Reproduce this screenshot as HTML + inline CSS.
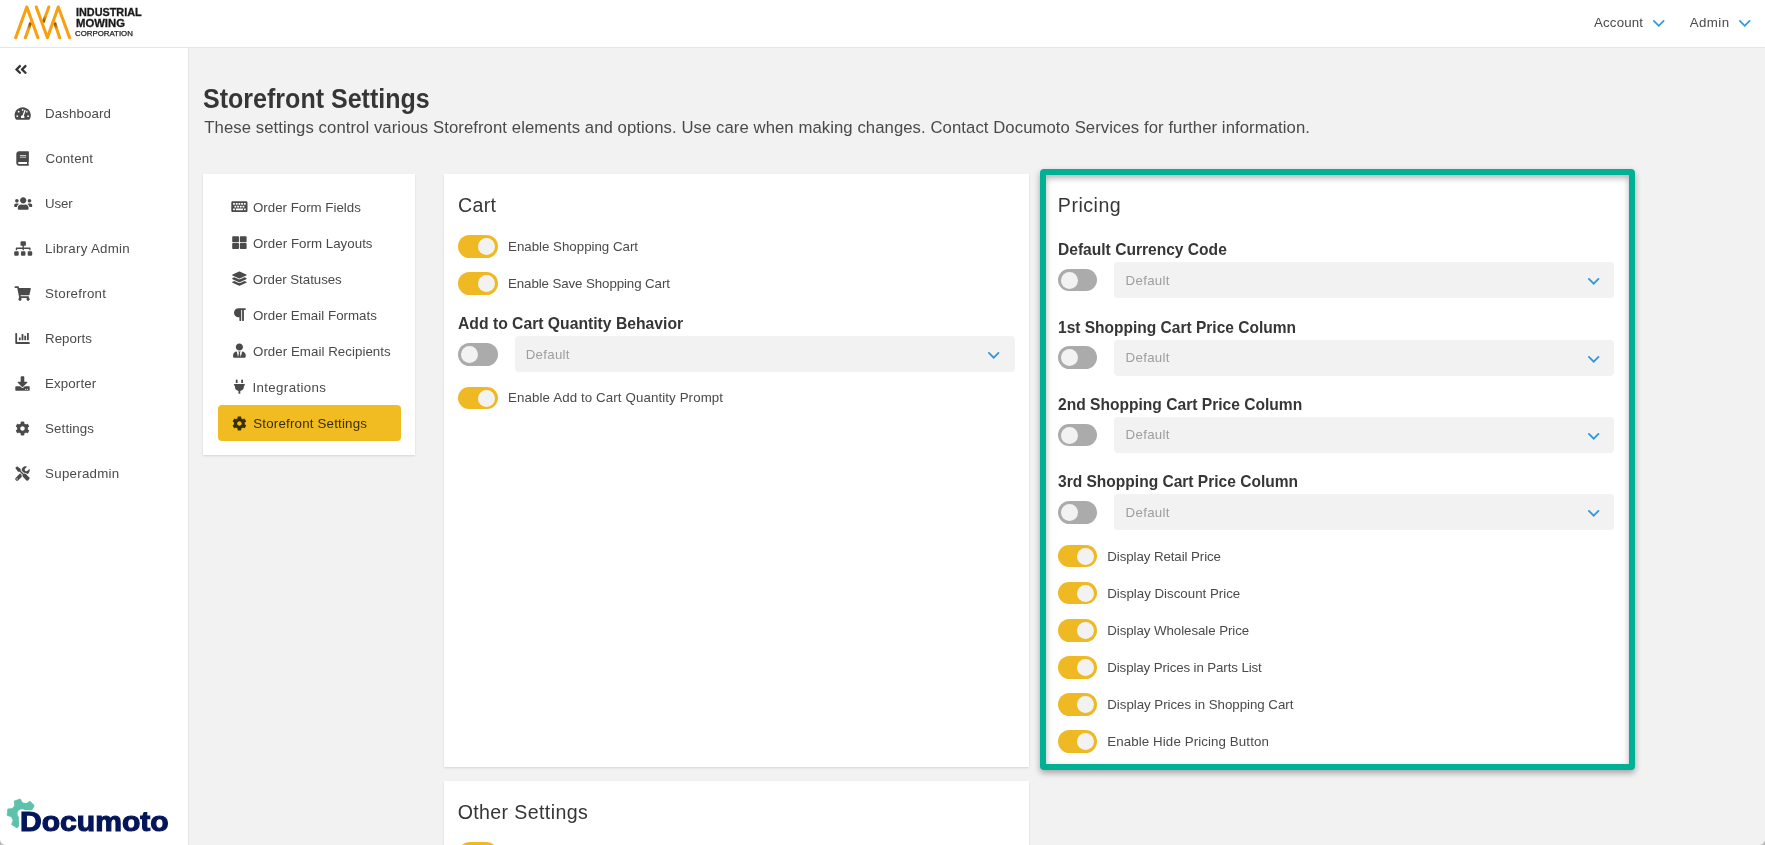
<!DOCTYPE html>
    <html lang="en"><head><meta charset="utf-8"><title>Storefront Settings</title>
    <style>
    html,body{margin:0;padding:0}
    body{width:1765px;height:845px;overflow:hidden;position:relative;background:#f2f2f2;font-family:"Liberation Sans",sans-serif;color:#4a4a4a}
    .t{position:absolute;white-space:pre;line-height:1;display:block;margin:0;font-weight:400;transform-origin:0 50%}
    .ic{position:absolute;display:block;overflow:visible}
    header{position:absolute;left:0;top:0;width:1765px;height:47px;background:#fff;border-bottom:1px solid #e6e6e6}
    nav.side{position:absolute;left:0;top:48px;width:188px;height:797px;background:#fff;border-right:1px solid #e6e6e6}
    .panel{position:absolute;background:#fff;box-shadow:0 1px 2px rgba(0,0,0,.12)}
    .active{position:absolute;left:218px;top:405px;width:183px;height:36px;background:#f0bc22;border-radius:4px}
    .tg{position:absolute;background:#ababab;display:block}
    .tg i{position:absolute;width:17px;height:17px;border-radius:50%;background:#f2f2f2;display:block}
    .tg.on{background:#eeb923}
    .sel{position:absolute;background:#f2f2f2;border-radius:4px}
    .frame{position:absolute;left:1040px;top:169px;width:583px;height:589px;border:6px solid #00b094;border-radius:4px;background:#fff;
     box-shadow:0 3px 6px rgba(0,0,0,.33), inset 0 3px 6px rgba(0,0,0,.3)}
    .c{position:absolute;width:6px;height:6px;display:block}
    #app{position:absolute;left:0;top:0;width:1765px;height:845px;overflow:hidden;will-change:transform}
</style></head><body><div id="app">
    
<main>
<h1 class="t" style="left:202.94px;top:84.41px;font-size:28.4px;letter-spacing:0.000px;color:#363636;font-weight:700;transform:translateY(0px) scaleX(0.8819);">Storefront Settings</h1>
<p class="t" style="left:204.27px;top:120.33px;font-size:16.7px;letter-spacing:0.078px;color:#4a4a4a;">These settings control various Storefront elements and options. Use care when making changes. Contact Documoto Services for further information.</p>
<div class="panel" style="left:203px;top:174px;width:212px;height:281px"></div>
<div class="active"></div>
<svg class="ic" style="left:231px;top:199px" width="18" height="16" viewBox="0 0 18 16"><path fill="#4a4a4a" transform="translate(0.30 0.40) scale(0.02813)" d="M528 448H48c-26.510 0-48-21.490-48-48V112c0-26.510 21.490-48 48-48h480c26.510 0 48 21.490 48 48v288c0 26.510-21.490 48-48 48zM128 180v-40c0-6.627-5.373-12-12-12H76c-6.627 0-12 5.373-12 12v40c0 6.627 5.373 12 12 12h40c6.627 0 12-5.373 12-12zm96 0v-40c0-6.627-5.373-12-12-12h-40c-6.627 0-12 5.373-12 12v40c0 6.627 5.373 12 12 12h40c6.627 0 12-5.373 12-12zm96 0v-40c0-6.627-5.373-12-12-12h-40c-6.627 0-12 5.373-12 12v40c0 6.627 5.373 12 12 12h40c6.627 0 12-5.373 12-12zm96 0v-40c0-6.627-5.373-12-12-12h-40c-6.627 0-12 5.373-12 12v40c0 6.627 5.373 12 12 12h40c6.627 0 12-5.373 12-12zm96 0v-40c0-6.627-5.373-12-12-12h-40c-6.627 0-12 5.373-12 12v40c0 6.627 5.373 12 12 12h40c6.627 0 12-5.373 12-12zm-336 96v-40c0-6.627-5.373-12-12-12h-40c-6.627 0-12 5.373-12 12v40c0 6.627 5.373 12 12 12h40c6.627 0 12-5.373 12-12zm96 0v-40c0-6.627-5.373-12-12-12h-40c-6.627 0-12 5.373-12 12v40c0 6.627 5.373 12 12 12h40c6.627 0 12-5.373 12-12zm96 0v-40c0-6.627-5.373-12-12-12h-40c-6.627 0-12 5.373-12 12v40c0 6.627 5.373 12 12 12h40c6.627 0 12-5.373 12-12zm96 0v-40c0-6.627-5.373-12-12-12h-40c-6.627 0-12 5.373-12 12v40c0 6.627 5.373 12 12 12h40c6.627 0 12-5.373 12-12zm-336 96v-40c0-6.627-5.373-12-12-12H76c-6.627 0-12 5.373-12 12v40c0 6.627 5.373 12 12 12h40c6.627 0 12-5.373 12-12zm288 0v-40c0-6.627-5.373-12-12-12H172c-6.627 0-12 5.373-12 12v40c0 6.627 5.373 12 12 12h232c6.627 0 12-5.373 12-12zm96 0v-40c0-6.627-5.373-12-12-12h-40c-6.627 0-12 5.373-12 12v40c0 6.627 5.373 12 12 12h40c6.627 0 12-5.373 12-12z"/></svg>
<span class="t" style="left:253.02px;top:200.95px;font-size:13.3px;letter-spacing:-0.006px;color:#4a4a4a;">Order Form Fields</span>
<svg class="ic" style="left:232px;top:235px" width="16" height="16" viewBox="0 0 16 16"><path fill="#4a4a4a" transform="translate(0.20 0.40) scale(0.02813)" d="M296 32h192c13.255 0 24 10.745 24 24v160c0 13.255-10.745 24-24 24H296c-13.255 0-24-10.745-24-24V56c0-13.255 10.745-24 24-24zm-80 0H24C10.745 32 0 42.745 0 56v160c0 13.255 10.745 24 24 24h192c13.255 0 24-10.745 24-24V56c0-13.255-10.745-24-24-24zM0 296v160c0 13.255 10.745 24 24 24h192c13.255 0 24-10.745 24-24V296c0-13.255-10.745-24-24-24H24c-13.255 0-24 10.745-24 24zm296 184h192c13.255 0 24-10.745 24-24V296c0-13.255-10.745-24-24-24H296c-13.255 0-24 10.745-24 24v160c0 13.255 10.745 24 24 24z"/></svg>
<span class="t" style="left:253.01px;top:236.95px;font-size:13.3px;letter-spacing:0.032px;color:#4a4a4a;">Order Form Layouts</span>
<svg class="ic" style="left:232px;top:271px" width="16" height="16" viewBox="0 0 16 16"><path fill="#4a4a4a" transform="translate(0.20 0.40) scale(0.02813)" d="M12.410 148.020l232.940 105.670c6.800 3.090 14.490 3.090 21.290 0l232.940-105.670c16.550-7.510 16.550-32.520 0-40.030L266.650 2.310a25.607 25.607 0 0 0-21.290 0L12.410 107.980c-16.550 7.510-16.550 32.530 0 40.040zm487.180 88.280l-58.090-26.330-161.640 73.270c-7.560 3.430-15.590 5.170-23.860 5.170s-16.290-1.740-23.860-5.170L70.510 209.970l-58.100 26.330c-16.550 7.500-16.550 32.500 0 40l232.940 105.590c6.800 3.080 14.490 3.080 21.290 0L499.590 276.300c16.550-7.500 16.550-32.500 0-40zm0 127.800l-57.870-26.230-161.860 73.370c-7.560 3.430-15.590 5.170-23.860 5.170s-16.290-1.740-23.860-5.170L70.290 337.870 12.410 364.100c-16.550 7.500-16.550 32.500 0 40l232.940 105.590c6.800 3.080 14.490 3.080 21.290 0L499.590 404.100c16.550-7.500 16.550-32.500 0-40z"/></svg>
<span class="t" style="left:252.85px;top:272.95px;font-size:13.3px;letter-spacing:-0.039px;color:#4a4a4a;">Order Statuses</span>
<svg class="ic" style="left:233px;top:307px" width="14" height="16" viewBox="0 0 14 16"><path fill="#4a4a4a" transform="translate(0.10 0.40) scale(0.02813)" d="M448 48v32a16 16 0 0 1-16 16h-48v368a16 16 0 0 1-16 16h-32a16 16 0 0 1-16-16V96h-32v368a16 16 0 0 1-16 16h-32a16 16 0 0 1-16-16V352h-32a160 160 0 0 1 0-320h240a16 16 0 0 1 16 16z"/></svg>
<span class="t" style="left:253.01px;top:308.95px;font-size:13.3px;letter-spacing:0.029px;color:#4a4a4a;">Order Email Formats</span>
<svg class="ic" style="left:233px;top:343px" width="14" height="16" viewBox="0 0 14 16"><path fill="#4a4a4a" transform="translate(0.10 0.40) scale(0.02813)" d="M224 256c70.700 0 128-57.300 128-128S294.700 0 224 0 96 57.300 96 128s57.300 128 128 128zm95.800 32.600L272 480l-32-136 32-56h-96l32 56-32 136-47.800-191.400C56.900 292 0 350.300 0 422.400V464c0 26.500 21.500 48 48 48h352c26.500 0 48-21.500 48-48v-41.600c0-72.100-56.900-130.400-128.200-133.800z"/></svg>
<span class="t" style="left:253.01px;top:344.95px;font-size:13.3px;letter-spacing:0.046px;color:#4a4a4a;">Order Email Recipients</span>
<svg class="ic" style="left:234px;top:379px" width="12" height="16" viewBox="0 0 12 16"><path fill="#4a4a4a" transform="translate(0.00 0.40) scale(0.02813)" d="M320 32a32 32 0 0 0-64 0v96h64zm48 128H16a16 16 0 0 0-16 16v32a16 16 0 0 0 16 16h16v32a160.070 160.070 0 0 0 128 156.800V512h64v-99.200A160.070 160.070 0 0 0 352 256v-32h16a16 16 0 0 0 16-16v-32a16 16 0 0 0-16-16zM128 32a32 32 0 0 0-64 0v96h64z"/></svg>
<span class="t" style="left:252.46px;top:380.95px;font-size:13.3px;letter-spacing:0.364px;color:#4a4a4a;">Integrations</span>
<svg class="ic" style="left:232px;top:416px" width="16" height="16" viewBox="0 0 16 16"><path fill="#3a2e07" transform="translate(0.20 0.20) scale(0.02813)" d="M487.4 315.7l-42.600-24.600c4.300-23.200 4.300-47 0-70.200l42.600-24.600c4.900-2.800 7.100-8.600 5.500-14-11.100-35.600-30-67.800-54.700-94.600-3.800-4.100-10-5.100-14.800-2.300L380.800 110c-17.900-15.400-38.500-27.300-60.800-35.100V25.800c0-5.600-3.900-10.500-9.400-11.700-36.700-8.200-74.300-7.800-109.200 0-5.500 1.200-9.400 6.100-9.400 11.700V75c-22.200 7.900-42.800 19.800-60.800 35.100L88.700 85.500c-4.900-2.800-11-1.900-14.800 2.300-24.700 26.700-43.600 58.900-54.700 94.600-1.700 5.400.6 11.200 5.500 14L67.300 221c-4.300 23.200-4.300 47 0 70.200l-42.600 24.600c-4.900 2.800-7.100 8.600-5.500 14 11.100 35.600 30 67.800 54.700 94.600 3.800 4.100 10 5.100 14.800 2.300l42.600-24.600c17.900 15.400 38.500 27.300 60.800 35.100v49.200c0 5.600 3.900 10.500 9.400 11.700 36.700 8.200 74.300 7.800 109.200 0 5.500-1.200 9.400-6.100 9.400-11.700v-49.200c22.200-7.900 42.800-19.800 60.800-35.100l42.600 24.600c4.900 2.800 11 1.900 14.800-2.300 24.700-26.700 43.600-58.900 54.700-94.600 1.500-5.500-.7-11.300-5.600-14.100zM256 336c-44.100 0-80-35.900-80-80s35.900-80 80-80 80 35.900 80 80-35.900 80-80 80z"/></svg>
<span class="t" style="left:253.28px;top:416.95px;font-size:13.3px;letter-spacing:0.198px;color:#3a2e07;">Storefront Settings</span>
<section><div class="panel" style="left:444px;top:174px;width:585px;height:593px"></div>
<span class="t" style="left:457.89px;top:195.52px;font-size:19.6px;letter-spacing:0.388px;color:#363636;">Cart</span>
<span class="tg on" style="left:458px;top:235px;width:40px;height:23px;border-radius:11.5px"><i style="left:20.1px;top:3.0px"></i></span>
<span class="t" style="left:508.04px;top:239.95px;font-size:13.3px;letter-spacing:-0.005px;color:#4a4a4a;">Enable Shopping Cart</span>
<span class="tg on" style="left:458px;top:272px;width:40px;height:23px;border-radius:11.5px"><i style="left:20.1px;top:3.0px"></i></span>
<span class="t" style="left:508.04px;top:276.95px;font-size:13.3px;letter-spacing:-0.093px;color:#4a4a4a;">Enable Save Shopping Cart</span>
<span class="tg on" style="left:458px;top:387px;width:40px;height:22px;border-radius:11.0px"><i style="left:20.1px;top:2.5px"></i></span>
<span class="t" style="left:508.04px;top:390.95px;font-size:13.3px;letter-spacing:0.110px;color:#4a4a4a;">Enable Add to Cart Quantity Prompt</span>
<span class="t" style="left:457.71px;top:316.21px;font-size:16.6px;letter-spacing:0.000px;color:#363636;font-weight:700;transform:translateY(0px) scaleX(0.9466);">Add to Cart Quantity Behavior</span>
<span class="tg" style="left:458px;top:343px;width:40px;height:23px;border-radius:11.5px"><i style="left:2.9px;top:3.0px"></i></span>
<div class="sel" style="left:515px;top:336px;width:500px;height:36px"></div><svg class="ic" style="left:987.10px;top:350.70px" width="13.40" height="8.60" viewBox="-1 -1 13.40 8.60"><polyline points="0.90,0.90 5.70,5.70 10.50,0.90" fill="none" stroke="#3296dc" stroke-width="1.8" stroke-linecap="round" stroke-linejoin="miter"/></svg>
<span class="t" style="left:525.73px;top:347.95px;font-size:13.3px;letter-spacing:0.277px;color:#9e9e9e;">Default</span>
</section>
<section><div class="panel" style="left:444px;top:781px;width:585px;height:80px"></div>
<span class="t" style="left:457.64px;top:802.92px;font-size:19.6px;letter-spacing:0.376px;color:#363636;">Other Settings</span>
<span class="tg on" style="left:458px;top:842px;width:40px;height:23px;border-radius:11.5px"><i style="left:20.1px;top:3.0px"></i></span>
</section>
<section><div class="frame"></div>
<span class="t" style="left:1057.86px;top:195.52px;font-size:19.6px;letter-spacing:0.489px;color:#363636;">Pricing</span>
<span class="t" style="left:1057.79px;top:242.21px;font-size:16.6px;letter-spacing:0.000px;color:#363636;font-weight:700;transform:translateY(0px) scaleX(0.9388);">Default Currency Code</span>
<span class="tg" style="left:1058px;top:269px;width:39px;height:22px;border-radius:11.0px"><i style="left:2.9px;top:2.5px"></i></span>
<div class="sel" style="left:1114px;top:262px;width:500px;height:36px"></div><svg class="ic" style="left:1587.00px;top:276.70px" width="13.40" height="8.60" viewBox="-1 -1 13.40 8.60"><polyline points="0.90,0.90 5.70,5.70 10.50,0.90" fill="none" stroke="#3296dc" stroke-width="1.8" stroke-linecap="round" stroke-linejoin="miter"/></svg>
<span class="t" style="left:1125.52px;top:273.95px;font-size:13.3px;letter-spacing:0.314px;color:#9e9e9e;">Default</span>
<span class="t" style="left:1057.88px;top:320.21px;font-size:16.6px;letter-spacing:0.000px;color:#363636;font-weight:700;transform:translateY(0px) scaleX(0.9352);">1st Shopping Cart Price Column</span>
<span class="tg" style="left:1058px;top:346px;width:39px;height:23px;border-radius:11.5px"><i style="left:2.9px;top:3.0px"></i></span>
<div class="sel" style="left:1114px;top:340px;width:500px;height:36px"></div><svg class="ic" style="left:1587.00px;top:354.70px" width="13.40" height="8.60" viewBox="-1 -1 13.40 8.60"><polyline points="0.90,0.90 5.70,5.70 10.50,0.90" fill="none" stroke="#3296dc" stroke-width="1.8" stroke-linecap="round" stroke-linejoin="miter"/></svg>
<span class="t" style="left:1125.52px;top:350.95px;font-size:13.3px;letter-spacing:0.314px;color:#9e9e9e;">Default</span>
<span class="t" style="left:1057.78px;top:397.21px;font-size:16.6px;letter-spacing:0.000px;color:#363636;font-weight:700;transform:translateY(0px) scaleX(0.9393);">2nd Shopping Cart Price Column</span>
<span class="tg" style="left:1058px;top:424px;width:39px;height:22px;border-radius:11.0px"><i style="left:2.9px;top:2.5px"></i></span>
<div class="sel" style="left:1114px;top:417px;width:500px;height:36px"></div><svg class="ic" style="left:1587.00px;top:431.70px" width="13.40" height="8.60" viewBox="-1 -1 13.40 8.60"><polyline points="0.90,0.90 5.70,5.70 10.50,0.90" fill="none" stroke="#3296dc" stroke-width="1.8" stroke-linecap="round" stroke-linejoin="miter"/></svg>
<span class="t" style="left:1125.52px;top:427.95px;font-size:13.3px;letter-spacing:0.314px;color:#9e9e9e;">Default</span>
<span class="t" style="left:1057.78px;top:474.21px;font-size:16.6px;letter-spacing:0.000px;color:#363636;font-weight:700;transform:translateY(0px) scaleX(0.9364);">3rd Shopping Cart Price Column</span>
<span class="tg" style="left:1058px;top:501px;width:39px;height:23px;border-radius:11.5px"><i style="left:2.9px;top:3.0px"></i></span>
<div class="sel" style="left:1114px;top:494px;width:500px;height:36px"></div><svg class="ic" style="left:1587.00px;top:508.70px" width="13.40" height="8.60" viewBox="-1 -1 13.40 8.60"><polyline points="0.90,0.90 5.70,5.70 10.50,0.90" fill="none" stroke="#3296dc" stroke-width="1.8" stroke-linecap="round" stroke-linejoin="miter"/></svg>
<span class="t" style="left:1125.52px;top:505.95px;font-size:13.3px;letter-spacing:0.314px;color:#9e9e9e;">Default</span>
<span class="tg on" style="left:1058px;top:545px;width:39px;height:22px;border-radius:11.0px"><i style="left:19.1px;top:2.5px"></i></span>
<span class="t" style="left:1107.28px;top:549.95px;font-size:13.3px;letter-spacing:-0.083px;color:#4a4a4a;">Display Retail Price</span>
<span class="tg on" style="left:1058px;top:582px;width:39px;height:22px;border-radius:11.0px"><i style="left:19.1px;top:2.5px"></i></span>
<span class="t" style="left:1107.28px;top:586.95px;font-size:13.3px;letter-spacing:-0.004px;color:#4a4a4a;">Display Discount Price</span>
<span class="tg on" style="left:1058px;top:619px;width:39px;height:23px;border-radius:11.5px"><i style="left:19.1px;top:3.0px"></i></span>
<span class="t" style="left:1107.28px;top:623.95px;font-size:13.3px;letter-spacing:-0.066px;color:#4a4a4a;">Display Wholesale Price</span>
<span class="tg on" style="left:1058px;top:656px;width:39px;height:23px;border-radius:11.5px"><i style="left:19.1px;top:3.0px"></i></span>
<span class="t" style="left:1107.28px;top:660.95px;font-size:13.3px;letter-spacing:-0.107px;color:#4a4a4a;">Display Prices in Parts List</span>
<span class="tg on" style="left:1058px;top:693px;width:39px;height:23px;border-radius:11.5px"><i style="left:19.1px;top:3.0px"></i></span>
<span class="t" style="left:1107.28px;top:697.95px;font-size:13.3px;letter-spacing:-0.030px;color:#4a4a4a;">Display Prices in Shopping Cart</span>
<span class="tg on" style="left:1058px;top:730px;width:39px;height:23px;border-radius:11.5px"><i style="left:19.1px;top:3.0px"></i></span>
<span class="t" style="left:1107.28px;top:734.95px;font-size:13.3px;letter-spacing:0.106px;color:#4a4a4a;">Enable Hide Pricing Button</span>
</section>
</main>
<header>
<svg class="ic" style="left:0;top:0" width="150" height="47" viewBox="0 0 150 47"><defs><linearGradient id="sg0" gradientUnits="userSpaceOnUse" x1="30.6" y1="23.0" x2="28.41" y2="29.20"><stop offset="0" stop-color="#5a4210" stop-opacity=".85"/><stop offset="1" stop-color="#5a4210" stop-opacity="0"/></linearGradient><linearGradient id="sg1" gradientUnits="userSpaceOnUse" x1="43.3" y1="22.0" x2="45.62" y2="15.68"><stop offset="0" stop-color="#5a4210" stop-opacity=".85"/><stop offset="1" stop-color="#5a4210" stop-opacity="0"/></linearGradient><linearGradient id="sg2" gradientUnits="userSpaceOnUse" x1="54.7" y1="23.0" x2="56.80" y2="29.20"><stop offset="0" stop-color="#5a4210" stop-opacity=".85"/><stop offset="1" stop-color="#5a4210" stop-opacity="0"/></linearGradient></defs><line x1="25.38" y1="37.75" x2="30.6" y2="23.0" stroke="#f9a010" stroke-width="3.05" stroke-linecap="round"/><line x1="48.82" y1="6.95" x2="43.3" y2="22.0" stroke="#f9a010" stroke-width="3.05" stroke-linecap="round"/><line x1="59.7" y1="37.75" x2="54.7" y2="23.0" stroke="#f9a010" stroke-width="3.05" stroke-linecap="round"/><line x1="25.38" y1="37.75" x2="30.6" y2="23.0" stroke="url(#sg0)" stroke-width="3.05" stroke-linecap="butt"/><line x1="48.82" y1="6.95" x2="43.3" y2="22.0" stroke="url(#sg1)" stroke-width="3.05" stroke-linecap="butt"/><line x1="59.7" y1="37.75" x2="54.7" y2="23.0" stroke="url(#sg2)" stroke-width="3.05" stroke-linecap="butt"/><polyline points="15.68,37.75 26.8,6.95 37.93,37.75" fill="none" stroke="#f9a010" stroke-width="3.05" stroke-linecap="round" stroke-linejoin="round"/><polyline points="36.27,6.95 47.4,37.75 58.28,6.95 69.64,37.75" fill="none" stroke="#f9a010" stroke-width="3.05" stroke-linecap="round" stroke-linejoin="round"/></svg>
<span class="t" style="left:75.83px;top:8.45px;font-size:10.3px;letter-spacing:0.000px;color:#1a1a1a;font-weight:700;transform:translateY(0px) scaleX(1.0526);-webkit-text-stroke:0.3px #1a1a1a;">INDUSTRIAL</span>
<span class="t" style="left:75.79px;top:19.05px;font-size:10.3px;letter-spacing:0.000px;color:#1a1a1a;font-weight:700;transform:translateY(0px) scaleX(1.0975);-webkit-text-stroke:0.3px #1a1a1a;">MOWING</span>
<span class="t" style="left:75.38px;top:29.94px;font-size:7.3px;letter-spacing:0.000px;color:#222;transform:translateY(0px) scaleX(1.0754);-webkit-text-stroke:0.25px #222;">CORPORATION</span>
<span class="t" style="left:1594.12px;top:15.95px;font-size:13.3px;letter-spacing:0.123px;color:#4a4a4a;">Account</span>
<svg class="ic" style="left:1651.90px;top:19.40px" width="13.50" height="8.60" viewBox="-1 -1 13.50 8.60"><polyline points="0.85,0.85 5.75,5.75 10.65,0.85" fill="none" stroke="#3296dc" stroke-width="1.7" stroke-linecap="round" stroke-linejoin="miter"/></svg>
<span class="t" style="left:1689.77px;top:15.95px;font-size:13.3px;letter-spacing:0.394px;color:#4a4a4a;">Admin</span>
<svg class="ic" style="left:1738.00px;top:19.40px" width="13.50" height="8.60" viewBox="-1 -1 13.50 8.60"><polyline points="0.85,0.85 5.75,5.75 10.65,0.85" fill="none" stroke="#3296dc" stroke-width="1.7" stroke-linecap="round" stroke-linejoin="miter"/></svg>
</header>
<nav class="side"><div style="position:absolute;left:0;top:-48px">
<svg class="ic" style="left:14px;top:62px" width="15" height="16" viewBox="0 0 15 16"><path fill="#363636" transform="translate(0.47 0.05) scale(0.02891)" d="M223.7 239l136-136c9.4-9.4 24.6-9.4 33.9 0l22.6 22.6c9.4 9.4 9.4 24.6 0 33.9L319.9 256l96.4 96.4c9.4 9.4 9.4 24.6 0 33.9L393.7 409c-9.4 9.4-24.6 9.4-33.9 0l-136-136c-9.5-9.400-9.500-24.600-.1-34zm-192 34l136 136c9.4 9.4 24.6 9.4 33.9 0l22.6-22.6c9.4-9.4 9.4-24.6 0-33.9L127.900 256l96.400-96.400c9.400-9.400 9.400-24.600 0-33.900L201.700 103c-9.400-9.400-24.600-9.400-33.900 0l-136 136c-9.500 9.400-9.500 24.600-.1 34z"/></svg>
<svg class="ic" style="left:14px;top:106px" width="18" height="16" viewBox="0 0 18 16"><path fill="#4a4a4a" transform="translate(0.60 0.30) scale(0.02813)" d="M288 32C128.940 32 0 160.940 0 320c0 52.800 14.250 102.260 39.060 144.800 5.610 9.620 16.300 15.200 27.440 15.200h443c11.140 0 21.830-5.580 27.440-15.200C561.750 422.260 576 372.800 576 320c0-159.060-128.940-288-288-288zm0 64c14.710 0 26.580 10.130 30.320 23.650-1.110 2.260-2.640 4.230-3.450 6.670l-9.220 27.670c-5.130 3.490-10.970 6.010-17.640 6.010-17.670 0-32-14.330-32-32S270.330 96 288 96zM96 384c-17.670 0-32-14.330-32-32s14.330-32 32-32 32 14.330 32 32-14.330 32-32 32zm48-160c-17.670 0-32-14.330-32-32s14.330-32 32-32 32 14.330 32 32-14.330 32-32 32zm246.770-72.410l-61.330 184C343.130 347.330 352 364.540 352 384c0 11.720-3.380 22.550-8.880 32H232.880c-5.500-9.450-8.880-20.280-8.880-32 0-33.940 26.500-61.430 59.900-63.590l61.340-184.010c4.170-12.560 17.730-19.450 30.360-15.170 12.570 4.190 19.350 17.790 15.170 30.360zm14.660 57.200l15.520-46.550c3.470-1.290 7.130-2.230 11.050-2.230 17.670 0 32 14.330 32 32s-14.330 32-32 32c-11.380-.010-21.250-6.100-26.570-15.220zM480 384c-17.670 0-32-14.330-32-32s14.330-32 32-32 32 14.330 32 32-14.330 32-32 32z"/></svg>
<span class="t" style="left:45.01px;top:106.75px;font-size:13.3px;letter-spacing:0.107px;color:#4a4a4a;">Dashboard</span>
<svg class="ic" style="left:16px;top:151px" width="14" height="16" viewBox="0 0 14 16"><path fill="#4a4a4a" transform="translate(0.30 0.30) scale(0.02813)" d="M448 360V24c0-13.300-10.700-24-24-24H96C43 0 0 43 0 96v320c0 53 43 96 96 96h328c13.300 0 24-10.700 24-24v-16c0-7.500-3.500-14.300-8.900-18.700-4.200-15.400-4.200-59.300 0-74.700 5.400-4.300 8.900-11.100 8.900-18.600zM128 134c0-3.300 2.700-6 6-6h212c3.300 0 6 2.700 6 6v20c0 3.300-2.700 6-6 6H134c-3.300 0-6-2.700-6-6v-20zm0 64c0-3.300 2.700-6 6-6h212c3.300 0 6 2.700 6 6v20c0 3.300-2.700 6-6 6H134c-3.300 0-6-2.700-6-6v-20zm253.400 250H96c-17.700 0-32-14.300-32-32 0-17.600 14.400-32 32-32h285.400c-1.900 17.100-1.900 46.900 0 64z"/></svg>
<span class="t" style="left:45.44px;top:151.75px;font-size:13.3px;letter-spacing:0.172px;color:#4a4a4a;">Content</span>
<svg class="ic" style="left:14px;top:196px" width="20" height="16" viewBox="0 0 20 16"><path fill="#4a4a4a" transform="translate(0.20 0.30) scale(0.02813)" d="M96 224c35.300 0 64-28.700 64-64s-28.700-64-64-64-64 28.700-64 64 28.700 64 64 64zm448 0c35.300 0 64-28.700 64-64s-28.700-64-64-64-64 28.700-64 64 28.700 64 64 64zm32 32h-64c-17.600 0-33.500 7.100-45.100 18.600 40.300 22.100 68.900 62 75.100 109.400h66c17.700 0 32-14.300 32-32v-32c0-35.300-28.700-64-64-64zm-256 0c61.900 0 112-50.100 112-112S381.900 32 320 32 208 82.100 208 144s50.100 112 112 112zm76.800 32h-8.300c-20.800 10-43.900 16-68.500 16s-47.600-6-68.500-16h-8.300C179.600 288 128 339.600 128 403.200V432c0 26.500 21.500 48 48 48h288c26.500 0 48-21.500 48-48v-28.800c0-63.600-51.600-115.200-115.200-115.200zm-223.700-13.400C161.500 263.100 145.600 256 128 256H64c-35.300 0-64 28.700-64 64v32c0 17.700 14.300 32 32 32h65.900c6.300-47.400 34.900-87.300 75.200-109.400z"/></svg>
<span class="t" style="left:45.12px;top:196.75px;font-size:13.3px;letter-spacing:-0.156px;color:#4a4a4a;">User</span>
<svg class="ic" style="left:14px;top:241px" width="20" height="16" viewBox="0 0 20 16"><path fill="#4a4a4a" transform="translate(0.20 0.30) scale(0.02813)" d="M128 352H32c-17.670 0-32 14.330-32 32v96c0 17.670 14.330 32 32 32h96c17.670 0 32-14.330 32-32v-96c0-17.670-14.330-32-32-32zm-24-80h192v48h48v-48h192v48h48v-57.590c0-21.170-17.230-38.410-38.410-38.410H344v-64h40c17.670 0 32-14.330 32-32V32c0-17.670-14.330-32-32-32H256c-17.670 0-32 14.330-32 32v96c0 17.670 14.330 32 32 32h40v64H94.410C73.230 224 56 241.230 56 262.410V320h48v-48zm264 80h-96c-17.670 0-32 14.330-32 32v96c0 17.670 14.330 32 32 32h96c17.670 0 32-14.330 32-32v-96c0-17.670-14.330-32-32-32zm240 0h-96c-17.670 0-32 14.330-32 32v96c0 17.670 14.330 32 32 32h96c17.670 0 32-14.330 32-32v-96c0-17.670-14.330-32-32-32z"/></svg>
<span class="t" style="left:45.01px;top:241.75px;font-size:13.3px;letter-spacing:0.286px;color:#4a4a4a;">Library Admin</span>
<svg class="ic" style="left:14px;top:286px" width="18" height="16" viewBox="0 0 18 16"><path fill="#4a4a4a" transform="translate(0.60 0.30) scale(0.02813)" d="M528.120 301.319l47.273-208C578.806 78.301 567.391 64 551.990 64H159.208l-9.166-44.810C147.758 8.021 137.930 0 126.529 0H24C10.745 0 0 10.745 0 24v16c0 13.255 10.745 24 24 24h69.883l70.248 343.435C147.325 417.100 136 435.222 136 456c0 30.928 25.072 56 56 56s56-25.072 56-56c0-15.674-6.447-29.835-16.824-40h209.647C430.447 426.165 424 440.326 424 456c0 30.928 25.072 56 56 56s56-25.072 56-56c0-22.172-12.888-41.332-31.579-50.405l5.517-24.276c3.413-15.018-8.002-29.319-23.403-29.319H218.117l-6.545-32h293.145c11.206 0 20.920-7.754 23.403-18.681z"/></svg>
<span class="t" style="left:45.08px;top:286.75px;font-size:13.3px;letter-spacing:0.280px;color:#4a4a4a;">Storefront</span>
<svg class="ic" style="left:15px;top:331px" width="16" height="16" viewBox="0 0 16 16"><path fill="#4a4a4a" transform="translate(0.30 0.30) scale(0.02813)" d="M332.800 320h38.400c6.400 0 12.800-6.400 12.800-12.800V172.800c0-6.400-6.400-12.800-12.800-12.800h-38.400c-6.400 0-12.800 6.400-12.800 12.800v134.400c0 6.400 6.400 12.800 12.800 12.800zm96 0h38.400c6.400 0 12.800-6.400 12.800-12.800V76.800c0-6.400-6.400-12.800-12.800-12.800h-38.400c-6.400 0-12.800 6.400-12.800 12.800v230.400c0 6.400 6.400 12.800 12.800 12.800zm-288 0h38.400c6.400 0 12.800-6.400 12.800-12.800v-70.400c0-6.400-6.400-12.800-12.800-12.800h-38.400c-6.400 0-12.800 6.400-12.800 12.800v70.400c0 6.400 6.400 12.800 12.800 12.800zm96 0h38.400c6.400 0 12.800-6.400 12.800-12.800V108.800c0-6.400-6.400-12.800-12.800-12.800h-38.400c-6.400 0-12.800 6.400-12.800 12.800v198.400c0 6.400 6.400 12.800 12.800 12.800zM496 384H64V80c0-8.840-7.160-16-16-16H16C7.160 64 0 71.160 0 80v336c0 17.670 14.330 32 32 32h464c8.840 0 16-7.160 16-16v-32c0-8.840-7.160-16-16-16z"/></svg>
<span class="t" style="left:45.03px;top:331.75px;font-size:13.3px;letter-spacing:0.055px;color:#4a4a4a;">Reports</span>
<svg class="ic" style="left:15px;top:376px" width="16" height="16" viewBox="0 0 16 16"><path fill="#4a4a4a" transform="translate(0.30 0.30) scale(0.02813)" d="M216 0h80c13.300 0 24 10.700 24 24v168h87.700c17.800 0 26.700 21.500 14.100 34.100L269.700 378.300c-7.500 7.500-19.800 7.500-27.300 0L90.100 226.100c-12.600-12.600-3.700-34.100 14.100-34.100H192V24c0-13.300 10.700-24 24-24zm296 376v112c0 13.300-10.700 24-24 24H24c-13.300 0-24-10.700-24-24V376c0-13.300 10.700-24 24-24h146.700l49 49c20.100 20.100 52.500 20.100 72.600 0l49-49H488c13.300 0 24 10.700 24 24zm-124 88c0-11-9-20-20-20s-20 9-20 20 9 20 20 20 20-9 20-20zm64 0c0-11-9-20-20-20s-20 9-20 20 9 20 20 20 20-9 20-20z"/></svg>
<span class="t" style="left:45.01px;top:376.75px;font-size:13.3px;letter-spacing:0.128px;color:#4a4a4a;">Exporter</span>
<svg class="ic" style="left:15px;top:421px" width="16" height="16" viewBox="0 0 16 16"><path fill="#4a4a4a" transform="translate(0.30 0.30) scale(0.02813)" d="M487.4 315.7l-42.600-24.600c4.300-23.200 4.300-47 0-70.200l42.600-24.600c4.900-2.800 7.100-8.600 5.500-14-11.100-35.600-30-67.800-54.700-94.600-3.800-4.100-10-5.100-14.800-2.300L380.800 110c-17.900-15.400-38.500-27.300-60.800-35.100V25.800c0-5.600-3.900-10.500-9.400-11.700-36.700-8.200-74.300-7.800-109.200 0-5.500 1.200-9.400 6.100-9.400 11.700V75c-22.200 7.900-42.800 19.800-60.800 35.100L88.700 85.500c-4.900-2.800-11-1.900-14.800 2.300-24.700 26.700-43.600 58.900-54.700 94.600-1.700 5.400.6 11.200 5.500 14L67.300 221c-4.300 23.200-4.300 47 0 70.200l-42.600 24.600c-4.900 2.800-7.100 8.600-5.500 14 11.100 35.600 30 67.800 54.700 94.600 3.800 4.100 10 5.100 14.800 2.300l42.600-24.600c17.900 15.400 38.500 27.300 60.800 35.100v49.200c0 5.600 3.900 10.500 9.400 11.700 36.700 8.200 74.300 7.800 109.200 0 5.500-1.200 9.400-6.100 9.400-11.700v-49.200c22.200-7.900 42.800-19.800 60.800-35.100l42.600 24.600c4.900 2.800 11 1.900 14.800-2.300 24.700-26.700 43.600-58.900 54.700-94.600 1.500-5.500-.7-11.300-5.600-14.100zM256 336c-44.100 0-80-35.900-80-80s35.900-80 80-80 80 35.900 80 80-35.900 80-80 80z"/></svg>
<span class="t" style="left:45.11px;top:421.75px;font-size:13.3px;letter-spacing:0.105px;color:#4a4a4a;">Settings</span>
<svg class="ic" style="left:15px;top:466px" width="16" height="16" viewBox="0 0 16 16"><path fill="#4a4a4a" transform="translate(0.30 0.30) scale(0.02813)" d="M501.100 395.700L384 278.600c-23.100-23.100-57.600-27.600-85.400-13.900L192 158.100V96L64 0 0 64l96 128h62.100l106.600 106.600c-13.600 27.800-9.200 62.300 13.900 85.400l117.100 117.100c14.600 14.600 38.200 14.600 52.700 0l52.700-52.700c14.500-14.600 14.500-38.200 0-52.700zM331.700 225c28.300 0 54.900 11 74.900 31l19.400 19.400c15.800-6.900 30.800-16.500 43.800-29.500 37.100-37.100 49.700-89.300 37.900-136.700-2.200-9-13.500-12.100-20.100-5.500l-74.400 74.400-67.900-11.300L334 98.900l74.400-74.400c6.600-6.600 3.400-17.900-5.700-20.200-47.400-11.700-99.600.9-136.600 37.900-28.500 28.500-41.900 66.100-41.200 103.600l82.100 82.100c8.100-1.900 16.500-2.900 24.700-2.900zm-103.900 82l-56.700-56.700L18.700 402.800c-25 25-25 65.500 0 90.500s65.500 25 90.500 0l123.600-123.600c-7.600-19.900-9.900-41.600-5-62.700zM64 472c-13.200 0-24-10.800-24-24 0-13.300 10.700-24 24-24s24 10.700 24 24c0 13.200-10.700 24-24 24z"/></svg>
<span class="t" style="left:45.08px;top:466.75px;font-size:13.3px;letter-spacing:0.271px;color:#4a4a4a;">Superadmin</span>
<svg class="ic" style="left:0;top:790px" width="60" height="55" viewBox="0 790 60 55"><defs><clipPath id="gc"><path d="M0 790H34.6V810.3H18.9V845H0Z"/></clipPath></defs><g clip-path="url(#gc)" fill="#5ec2ab"><polygon points="31.74,809.74 34.45,805.68 29.85,801.16 25.83,803.94" stroke-linejoin="round" stroke="#5ec2ab" stroke-width=".8"/><polygon points="22.69,803.23 20.26,799.00 14.16,801.10 14.86,805.92" stroke-linejoin="round" stroke="#5ec2ab" stroke-width=".8"/><polygon points="12.71,808.61 7.84,809.00 7.14,815.41 11.80,816.85" stroke-linejoin="round" stroke="#5ec2ab" stroke-width=".8"/><polygon points="13.31,819.94 11.58,824.50 17.07,827.88 20.36,824.28" stroke-linejoin="round" stroke="#5ec2ab" stroke-width=".8"/><circle cx="21.95" cy="813.8" r="7.85" fill="none" stroke="#5ec2ab" stroke-width="6.7"/></g></svg>
<span class="t" style="left:19.54px;top:808.58px;font-size:27px;letter-spacing:0.000px;color:#04165a;font-weight:700;transform:translateY(0px) scaleX(1.1135);-webkit-text-stroke:1.1px #04165a;">Documoto</span>
</div></nav>
<i class="c" style="left:0;bottom:0;background:radial-gradient(circle at 100% 0,rgba(165,165,165,0) 5.5px,rgba(165,165,165,.75) 6.5px)"></i><i class="c" style="right:0;bottom:0;background:radial-gradient(circle at 0 0,rgba(165,165,165,0) 5.5px,rgba(165,165,165,.75) 6.5px)"></i>
</div></body></html>
